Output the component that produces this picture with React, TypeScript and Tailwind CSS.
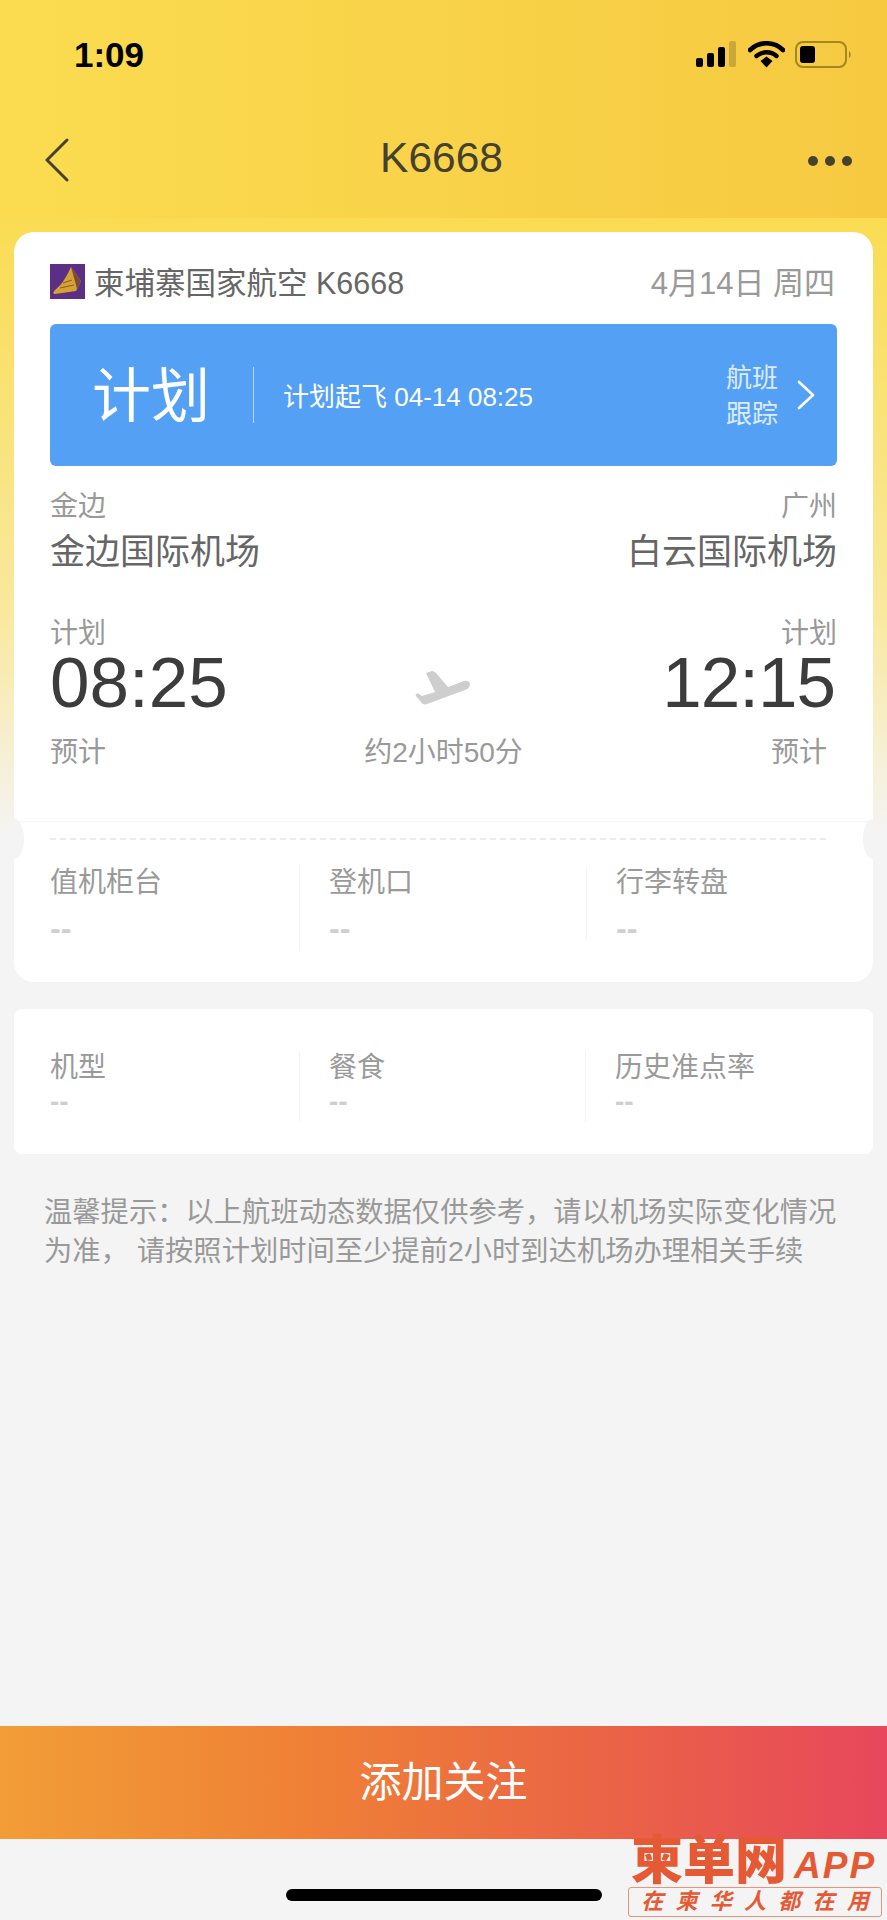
const sans = "font-['Liberation_Sans','Noto_Sans_CJK_SC',sans-serif]";

function Logo() {
  return (
    <svg width="35" height="35" viewBox="0 0 35 35" className="shrink-0">
      <rect width="35" height="35" fill="#5b2f86" />
      <path d="M21 3 L31 17 L26 27 L5 30 C3 30 3 28 5 26 C13 20 17 11 21 3 Z" fill="#d6a233" />
      <path d="M21 3 L31 17 L27 25 C25 17 23 10 21 3 Z" fill="#7d4b3c" />
      <path d="M10 24 L24 21 M13 19 L22 16" stroke="#8a5a2b" strokeWidth="1" fill="none" />
    </svg>
  );
}

function StatusIcons() {
  return (
    <div className="flex items-center gap-[10px]">
      <svg width="42" height="26" viewBox="0 0 42 26">
        <rect x="0" y="17" width="7" height="9" rx="2" fill="#000" />
        <rect x="11" y="12" width="7" height="14" rx="2" fill="#000" />
        <rect x="22" y="6" width="7" height="20" rx="2" fill="#000" />
        <rect x="33" y="0" width="7" height="26" rx="2" fill="#c9a83a" />
      </svg>
      <svg width="37" height="27" viewBox="0 0 37 27">
        <path d="M2 9 C11 0 26 0 35 9" stroke="#000" strokeWidth="4.6" fill="none" strokeLinecap="round" />
        <path d="M8.5 15 C14 10 23 10 28.5 15" stroke="#000" strokeWidth="4.4" fill="none" strokeLinecap="round" />
        <path d="M12.5 20 L18.5 15.5 L24.5 20 L18.5 26.5 Z" fill="#000" />
      </svg>
      <svg width="58" height="27" viewBox="0 0 58 27">
        <rect x="1" y="1" width="50" height="25" rx="7" fill="none" stroke="#a5861f" strokeWidth="2" />
        <rect x="5" y="5" width="15" height="17" rx="3" fill="#000" />
        <path d="M54 10 C56 11 56.500 16 54 17 Z" fill="#a5861f" />
      </svg>
    </div>
  );
}

function Plane() {
  return (
    <svg width="60" height="38" viewBox="0 0 60 38" className="mt-[10px]">
      <path
        d="M13 4 L19 2 C21 2 22 3 23 4 L35 18 L51 12 C54 11 57 13 57 15 C57 18 55 20 52 21 L14 35 C11 36 9 35 8 33 L3 27 C2 25 4 24 6 25 L9 27 L22 23 Z"
        fill="#cecece"
      />
    </svg>
  );
}

function InfoCol({ label, className, big }: { label: string; className: string; big?: boolean }) {
  return (
    <div className={className}>
      <div className="h-[34px] leading-[34px] text-[28px] text-[#9a9a9a] whitespace-nowrap">{label}</div>
      <div className={big ? "mt-[13px] h-[30px] leading-[30px] text-[32px] font-bold text-[#cfcfcf]" : "mt-[5px] h-[24px] leading-[24px] text-[28px] font-bold text-[#cfcfcf]"}>
        --
      </div>
    </div>
  );
}

export default function App() {
  return (
    <div className={`${sans} relative flex h-[1920px] w-full flex-col overflow-hidden bg-[#f4f4f4]`}>
      <header className="flex h-[218px] shrink-0 flex-col bg-[linear-gradient(90deg,#fbdc50,#f6c941)]">
        <div className="flex h-[108px] items-center justify-between pl-[74px] pr-[34px]">
          <span className="text-[35px] font-bold leading-none text-black">1:09</span>
          <StatusIcons />
        </div>
        <div className="mt-[25px] flex h-[50px] items-center justify-between pl-[44px] pr-[35px]">
          <svg width="26" height="44" viewBox="0 0 26 44" className="mt-[4px]">
            <path d="M23 2 L3 22 L23 42" stroke="#454030" strokeWidth="3" fill="none" strokeLinecap="round" strokeLinejoin="round" />
          </svg>
          <span className="ml-[5px] text-[42.5px] leading-none text-[#45412f]">K6668</span>
          <svg width="44" height="12" viewBox="0 0 44 12" className="mt-[6px]">
            <circle cx="5" cy="6" r="5" fill="#45412f" />
            <circle cx="22" cy="6" r="5" fill="#45412f" />
            <circle cx="39" cy="6" r="5" fill="#45412f" />
          </svg>
        </div>
      </header>

      <main className="flex-1 bg-[linear-gradient(180deg,#fadc52_0px,#f9e9a0_400px,#f4f4f4_620px)] px-[14px] pt-[14px]">
        <section className="relative h-[750px] rounded-[20px] bg-white">
          <div className="px-[36px] pt-[32px]">
            <div className="flex h-[35px] items-center justify-between">
              <div className="flex items-center gap-[9px]">
                <Logo />
                <span className="mt-[3px] whitespace-nowrap text-[30.5px] leading-none text-[#666]">柬埔寨国家航空 K6668</span>
              </div>
              <span className="mr-[2px] mt-[3px] whitespace-nowrap text-[31px] leading-none text-[#999]">4月14日 周四</span>
            </div>

            <div className="mt-[25px] flex h-[142px] items-center rounded-[6px] bg-[#53a0f5] pl-[44px] pr-[22px] text-white">
              <span className="mt-[4px] w-[114px] whitespace-nowrap text-[59px] leading-none -ml-[2px] mr-[2px]">计划</span>
              <div className="ml-[45px] h-[56px] w-px bg-white/60" />
              <span className="ml-[29px] mt-[3px] flex-1 whitespace-nowrap text-[26px] leading-none">计划起飞 04-14 08:25</span>
              <span className="ml-[2px] mt-[2px] w-[52px] text-[26px] leading-[36px] text-white/80">航班跟踪</span>
              <svg width="18" height="30" viewBox="0 0 18 30" className="ml-[19px]">
                <path d="M2 2 L16 15 L2 28" stroke="#fff" strokeWidth="2.6" fill="none" strokeLinecap="round" strokeLinejoin="round" />
              </svg>
            </div>

            <div className="mt-[24px] flex h-[34px] justify-between text-[28px] leading-[34px] text-[#999]">
              <span>金边</span>
              <span>广州</span>
            </div>
            <div className="mt-[6px] flex h-[44px] justify-between text-[35px] leading-[44px] text-[#666]">
              <span>金边国际机场</span>
              <span>白云国际机场</span>
            </div>

            <div className="mt-[43px] flex h-[34px] justify-between text-[28px] leading-[34px] text-[#999]">
              <span>计划</span>
              <span>计划</span>
            </div>
            <div className="-mt-[1px] grid h-[66px] grid-cols-3 items-center text-[71px] leading-[66px] text-[#3c3c3c]">
              <span>08:25</span>
              <div className="flex justify-center">
                <Plane />
              </div>
              <span className="pr-[2px] text-right tracking-[-1px]">12:15</span>
            </div>
            <div className="mt-[20px] grid h-[34px] grid-cols-3 text-[28px] leading-[34px] text-[#999]">
              <span>预计</span>
              <span className="whitespace-nowrap text-center">约2小时50分</span>
              <span className="pr-[10px] text-right">预计</span>
            </div>
          </div>

          <div className="mt-[51px] border-t border-[#f6f6f6] px-[36px] pt-[16px]">
            <div className="mr-[11px] border-t-2 border-dashed border-[#ececec]" />
            <div className="mt-[26px] flex">
              <InfoCol big label="值机柜台" className="h-[85px] w-[250px] border-r border-[#f4f4f4]" />
              <InfoCol big label="登机口" className="h-[74px] w-[287px] border-r border-[#f4f4f4] pl-[29px]" />
              <InfoCol big label="行李转盘" className="pl-[29px]" />
            </div>
          </div>

          <div className="absolute left-0 top-[587px] h-[40px] w-[10px] rounded-r-[100%_50%] bg-[#f4f4f4]" />
          <div className="absolute right-0 top-[587px] h-[40px] w-[10px] rounded-l-[100%_50%] bg-[#f4f4f4]" />
        </section>

        <section className="mt-[27px] flex h-[145px] rounded-[8px] bg-white pl-[36px] pt-[42px]">
          <InfoCol label="机型" className="h-[71px] w-[250px] border-r border-[#f4f4f4]" />
          <InfoCol label="餐食" className="h-[71px] w-[286px] border-r border-[#f4f4f4] pl-[29px]" />
          <InfoCol label="历史准点率" className="pl-[29px]" />
        </section>

        <p className="mt-[39px] ml-[30px] w-[800px] text-[28.3px] leading-[39px] text-[#999]">
          温馨提示：以上航班动态数据仅供参考，请以机场实际变化情况为准， 请按照计划时间至少提前2小时到达机场办理相关手续
        </p>
      </main>

      <div className="flex h-[113px] shrink-0 items-center justify-center bg-[linear-gradient(90deg,#f29d37,#ef8036_35%,#ea6247_70%,#e8475c)] text-[42px] leading-none text-white">
        添加关注
      </div>
      <div className="flex h-[81px] shrink-0 justify-center pt-[50px]">
        <div className="h-[12px] w-[316px] rounded-[6px] bg-black" />
      </div>

      <div className="absolute left-[628px] top-[1837px] w-[254px] text-[#e55a35]">
        <div className="flex h-[48px] items-center pl-[3px]">
          <span className="whitespace-nowrap text-[52px] font-black leading-none">柬单网</span>
          <span className="ml-[7px] mt-[8px] whitespace-nowrap text-[37px] font-bold italic leading-none tracking-[2px]">APP</span>
        </div>
        <div className="mt-[2px] flex h-[30px] items-center justify-around rounded-[3px] border border-[#e8947c] px-[6px] text-[22px] font-semibold italic leading-none">
          <span>在</span>
          <span>柬</span>
          <span>华</span>
          <span>人</span>
          <span>都</span>
          <span>在</span>
          <span>用</span>
        </div>
      </div>
    </div>
  );
}
